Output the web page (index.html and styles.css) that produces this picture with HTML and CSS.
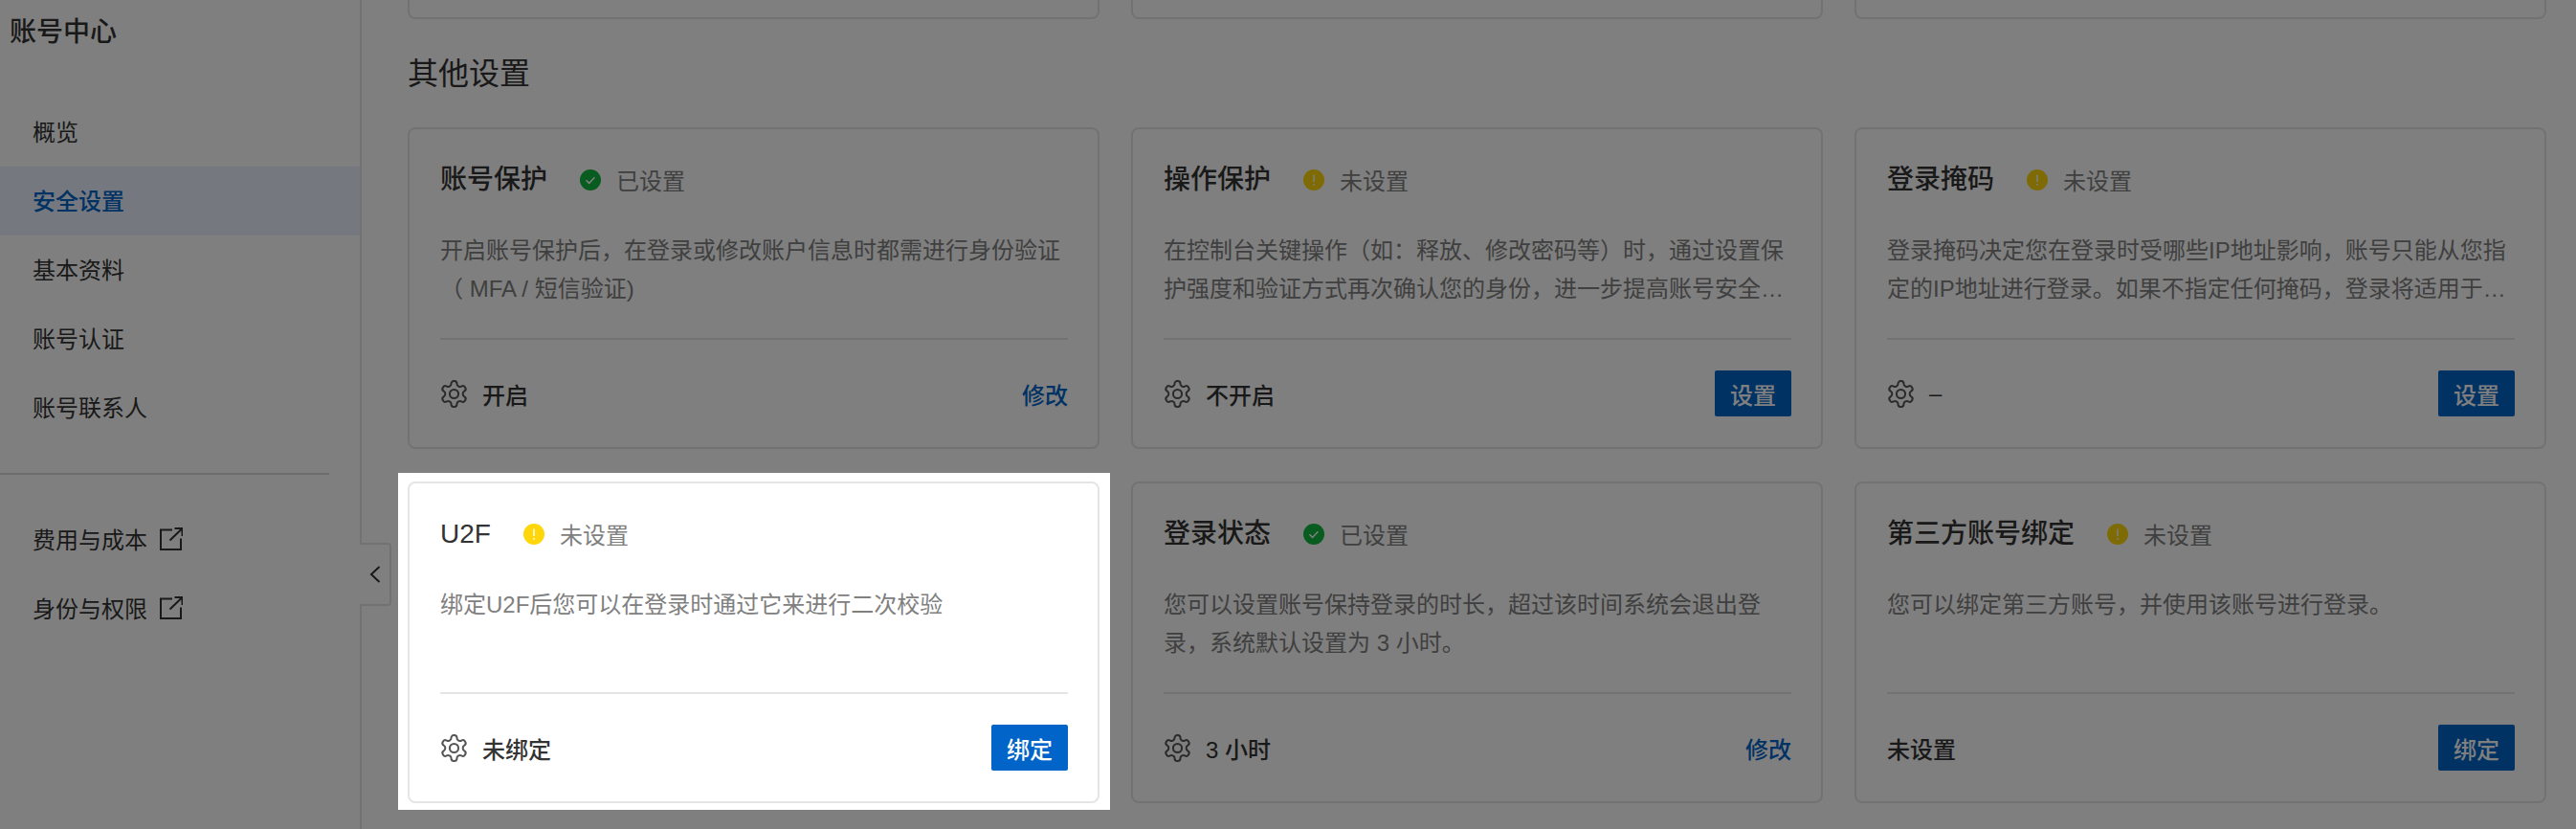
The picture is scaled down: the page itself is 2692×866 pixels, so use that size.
FILE: index.html
```html
<!DOCTYPE html>
<html lang="zh-CN">
<head>
<meta charset="utf-8">
<title>账号中心</title>
<link rel="stylesheet" href="styles.css">
</head>
<body>
<svg class="defs" width="0" height="0" aria-hidden="true">
  <defs>
    <symbol id="gear" viewBox="1.2 1.2 21.6 21.6">
      <path d="M12.22 2h-.44a2 2 0 0 0-2 2v.18a2 2 0 0 1-1 1.73l-.43.25a2 2 0 0 1-2 0l-.15-.08a2 2 0 0 0-2.73.73l-.22.38a2 2 0 0 0 .73 2.73l.15.1a2 2 0 0 1 1 1.72v.51a2 2 0 0 1-1 1.74l-.15.09a2 2 0 0 0-.73 2.73l.22.38a2 2 0 0 0 2.73.73l.15-.08a2 2 0 0 1 2 0l.43.25a2 2 0 0 1 1 1.73V20a2 2 0 0 0 2 2h.44a2 2 0 0 0 2-2v-.18a2 2 0 0 1 1-1.73l.43-.25a2 2 0 0 1 2 0l.15.08a2 2 0 0 0 2.73-.73l.22-.39a2 2 0 0 0-.73-2.73l-.15-.08a2 2 0 0 1-1-1.74v-.5a2 2 0 0 1 1-1.74l.15-.09a2 2 0 0 0 .73-2.73l-.22-.38a2 2 0 0 0-2.73-.73l-.15.08a2 2 0 0 1-2 0l-.43-.25a2 2 0 0 1-1-1.73V4a2 2 0 0 0-2-2z" fill="none" stroke="currentColor" stroke-width="1.5"/>
      <circle cx="12" cy="12" r="3.4" fill="none" stroke="currentColor" stroke-width="1.5"/>
    </symbol>
    <symbol id="ok" viewBox="0 0 22 22">
      <circle cx="11" cy="11" r="11" fill="currentColor"/>
      <path d="M6.5 11.300l3.100 3.100 5.800-6.200" fill="none" stroke="#fff" stroke-width="1.500"/>
    </symbol>
    <symbol id="warn" viewBox="0 0 22 22">
      <circle cx="11" cy="11" r="11" fill="currentColor"/>
      <path d="M11 5.500v7.500M11 15v1.800" fill="none" stroke="#fff" stroke-width="1.400"/>
    </symbol>
    <symbol id="ext" viewBox="0 0 24 24">
      <path d="M13 2.500H1v20.500h21V11.500" fill="none" stroke="currentColor" stroke-width="2"/>
      <path d="M10.500 13.500L23 1.500M15.500 1h8v8" fill="none" stroke="currentColor" stroke-width="2"/>
    </symbol>
  </defs>
</svg>

<aside class="sidebar">
  <h1 class="brand">账号中心</h1>
  <nav class="nav">
    <a class="nav-item">概览</a>
    <a class="nav-item is-active">安全设置</a>
    <a class="nav-item">基本资料</a>
    <a class="nav-item">账号认证</a>
    <a class="nav-item">账号联系人</a>
  </nav>
  <div class="nav-rule"></div>
  <nav class="nav">
    <a class="nav-item">费用与成本<svg class="ext"><use href="#ext"/></svg></a>
    <a class="nav-item">身份与权限<svg class="ext"><use href="#ext"/></svg></a>
  </nav>
  <button class="collapse" aria-label="收起">
    <svg width="12" height="20" viewBox="0 0 12 20"><path d="M10.500 2L2 10l8.500 8" fill="none" stroke="currentColor" stroke-width="2"/></svg>
  </button>
</aside>

<main class="main">
  <div class="grid stubs">
    <div class="stub"></div>
    <div class="stub"></div>
    <div class="stub"></div>
  </div>
  <h2 class="section-title">其他设置</h2>
  <div class="grid">
    <section class="card">
      <header class="card-head">
        <h3 class="card-title">账号保护</h3>
        <svg class="status-icon ok"><use href="#ok"/></svg>
        <span class="status">已设置</span>
      </header>
      <p class="card-desc">开启账号保护后，在登录或修改账户信息时都需进行身份验证（ MFA / 短信验证)</p>
      <footer class="card-foot">
        <div class="value"><svg class="gear"><use href="#gear"/></svg>开启</div>
        <a class="link">修改</a>
      </footer>
    </section>

    <section class="card">
      <header class="card-head">
        <h3 class="card-title">操作保护</h3>
        <svg class="status-icon warn"><use href="#warn"/></svg>
        <span class="status">未设置</span>
      </header>
      <p class="card-desc">在控制台关键操作（如：释放、修改密码等）时，通过设置保护强度和验证方式再次确认您的身份，进一步提高账号安全性。如需关闭请联系管理员。</p>
      <footer class="card-foot">
        <div class="value"><svg class="gear"><use href="#gear"/></svg>不开启</div>
        <button class="btn">设置</button>
      </footer>
    </section>

    <section class="card">
      <header class="card-head">
        <h3 class="card-title">登录掩码</h3>
        <svg class="status-icon warn"><use href="#warn"/></svg>
        <span class="status">未设置</span>
      </header>
      <p class="card-desc">登录掩码决定您在登录时受哪些IP地址影响，账号只能从您指定的IP地址进行登录。如果不指定任何掩码，登录将适用于所有IP地址。</p>
      <footer class="card-foot">
        <div class="value"><svg class="gear"><use href="#gear"/></svg>–</div>
        <button class="btn">设置</button>
      </footer>
    </section>

    <div class="spotlight">
      <div class="spotlight-bg"></div>
      <section class="card">
        <header class="card-head">
          <h3 class="card-title">U2F</h3>
          <svg class="status-icon warn"><use href="#warn"/></svg>
          <span class="status">未设置</span>
        </header>
        <p class="card-desc">绑定U2F后您可以在登录时通过它来进行二次校验</p>
        <footer class="card-foot">
          <div class="value"><svg class="gear"><use href="#gear"/></svg>未绑定</div>
          <button class="btn">绑定</button>
        </footer>
      </section>
    </div>

    <section class="card">
      <header class="card-head">
        <h3 class="card-title">登录状态</h3>
        <svg class="status-icon ok"><use href="#ok"/></svg>
        <span class="status">已设置</span>
      </header>
      <p class="card-desc">您可以设置账号保持登录的时长，超过该时间系统会退出登录，系统默认设置为 3 小时。</p>
      <footer class="card-foot">
        <div class="value"><svg class="gear"><use href="#gear"/></svg>3 小时</div>
        <a class="link">修改</a>
      </footer>
    </section>

    <section class="card">
      <header class="card-head">
        <h3 class="card-title">第三方账号绑定</h3>
        <svg class="status-icon warn"><use href="#warn"/></svg>
        <span class="status">未设置</span>
      </header>
      <p class="card-desc">您可以绑定第三方账号，并使用该账号进行登录。</p>
      <footer class="card-foot">
        <div class="value">未设置</div>
        <button class="btn">绑定</button>
      </footer>
    </section>
  </div>
</main>
</body>
</html>
```

FILE: styles.css
```css
* {
  box-sizing: border-box;
}

html,
body {
  height: 100%;
}

body {
  margin: 0;
  display: flex;
  overflow: hidden;
  background: #fff;
  color: #333;
  font-family: "Liberation Sans", "Noto Sans CJK SC", sans-serif;
  font-size: 24px;
}

.defs {
  position: absolute;
}

.sidebar {
  position: relative;
  flex: 0 0 378px;
  border-right: 2px solid #e5e5e5;
}

.brand {
  margin: 0;
  padding: 14px 0 0 10px;
  font-size: 28px;
  line-height: 40px;
  font-weight: 500;
  color: #333;
}

.nav {
  display: flex;
  flex-direction: column;
}

.brand + .nav {
  margin-top: 48px;
}

.nav-item {
  display: flex;
  align-items: center;
  height: 72px;
  padding: 0 0 3px 34px;
  color: #333;
  font-size: 24px;
}

.nav-item.is-active {
  background: #ebf1ff;
  color: #0064c8;
  font-weight: 500;
}

.ext {
  width: 24px;
  height: 24px;
  margin-left: 13px;
  color: #333;
}

.nav-rule {
  height: 2px;
  width: 344px;
  margin: 32px 0 32px;
  background: #d9d9d9;
}

.collapse {
  position: absolute;
  left: 376px;
  top: 567px;
  display: flex;
  align-items: center;
  justify-content: center;
  width: 33px;
  height: 66px;
  padding: 0;
  background: #fff;
  border: 2px solid #e5e5e5;
  border-left: 0;
  border-radius: 0 4px 4px 0;
  color: #333;
}

.main {
  flex: 1;
  min-width: 0;
  padding: 0 31px 0 48px;
}

.grid {
  display: grid;
  grid-template-columns: repeat(3, 1fr);
  gap: 34px 33px;
}

.stub {
  height: 20px;
  border: 2px solid #e5e5e5;
  border-top: 0;
  border-radius: 0 0 8px 8px;
}

.section-title {
  margin: 0;
  padding: 36px 0 35px;
  font-size: 32px;
  line-height: 42px;
  font-weight: 400;
  color: #333;
}

.card {
  position: relative;
  display: flex;
  flex-direction: column;
  height: 336px;
  padding: 33px 31px 0 32px;
  background: #fff;
  border: 2px solid #e5e5e5;
  border-radius: 8px;
}

.spotlight {
  position: relative;
  z-index: 1;
}

.spotlight-bg {
  position: absolute;
  top: -9px;
  right: -11px;
  bottom: -7px;
  left: -10px;
  background: #fff;
  box-shadow: 0 0 0 4000px rgba(0, 0, 0, 0.5);
}

.card-head {
  display: flex;
  align-items: center;
  height: 40px;
}

.card-title {
  margin: 0;
  font-size: 28px;
  line-height: 40px;
  font-weight: 500;
  color: #333;
}

.status-icon {
  flex: none;
  width: 22px;
  height: 22px;
  margin: 0 16px 0 34px;
}

.status-icon.ok {
  color: #12b840;
}

.status-icon.warn {
  color: #ffd60a;
}

.status {
  padding-bottom: 2px;
  color: #808080;
  font-size: 24px;
}

.card-desc {
  height: 80px;
  margin: 34px 0 0;
  color: #808080;
  font-size: 24px;
  line-height: 40px;
  display: -webkit-box;
  -webkit-box-orient: vertical;
  -webkit-line-clamp: 2;
  overflow: hidden;
}

.card-foot {
  flex: 1;
  display: flex;
  align-items: center;
  justify-content: space-between;
  margin-top: 31px;
  border-top: 2px solid #e5e5e5;
}

.value {
  display: flex;
  align-items: center;
  font-size: 24px;
  font-weight: 500;
  color: #333;
}

.gear {
  width: 29px;
  height: 29px;
  margin-right: 15px;
  color: #555;
}

.link {
  color: #0064c8;
  font-weight: 500;
}

.btn {
  width: 80px;
  height: 48px;
  padding: 0;
  border: 0;
  border-radius: 2px;
  background: #0064c8;
  color: #fff;
  font: inherit;
  font-weight: 500;
}
```
